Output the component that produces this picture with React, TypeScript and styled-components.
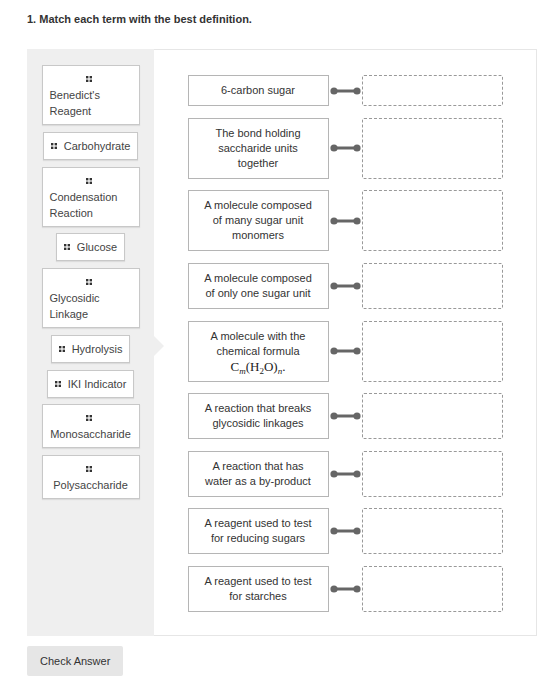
import React from "react";
import styled, { createGlobalStyle } from "styled-components";

const GlobalStyle = createGlobalStyle`
  body {
    margin: 0;
    background: #fff;
    font-family: "Liberation Sans", Arial, sans-serif;
    color: #333;
  }
`;

const Page = styled.div`
  width: 510px;
  padding: 12px 0 0 27px;
`;

const Title = styled.h3`
  margin: 0 0 22px;
  font-size: 11px;
  line-height: 15px;
  font-weight: bold;
  color: #333;
`;

const Board = styled.div`
  display: flex;
  border: 1px solid #e6e6e6;
  border-left: none;
  height: 585px;
`;

const TermColumn = styled.div`
  position: relative;
  width: 127px;
  flex: none;
  background: #efefef;
  margin-top: -1px;
  margin-bottom: -1px;
  padding-top: 16px;
  display: flex;
  flex-direction: column;
  align-items: center;
  gap: 6.75px;

  &::after {
    content: "";
    position: absolute;
    left: 100%;
    top: calc(50% - 7px);
    border-left: 10px solid #efefef;
    border-top: 10px solid transparent;
    border-bottom: 10px solid transparent;
  }
`;

const TermCard = styled.div`
  max-width: 98px;
  box-sizing: border-box;
  background: #fff;
  border: 1px solid #c8c8c8;
  box-shadow: 0 1px 1px rgba(0, 0, 0, 0.08);
  padding: 5px 7px;
  font-size: 11px;
  line-height: 16px;
  text-align: center;
  color: #444;
  cursor: move;
`;

const Label = styled.span`
  display: inline-block;
  text-align: left;
`;

const GripIcon = styled.svg`
  display: inline-block;
  vertical-align: middle;
  margin: -2px 4px 0 0;
`;

const Grip = () => (
  <GripIcon width="6" height="6" viewBox="0 0 6 6">
    <rect x="0" y="0" width="2.4" height="2.4" fill="#333" />
    <rect x="3.6" y="0" width="2.4" height="2.4" fill="#333" />
    <rect x="0" y="3.6" width="2.4" height="2.4" fill="#333" />
    <rect x="3.6" y="3.6" width="2.4" height="2.4" fill="#333" />
  </GripIcon>
);

const DefinitionColumn = styled.div`
  flex: 1;
  padding: 25px 0 22px;
  display: flex;
  flex-direction: column;
  align-items: center;
  gap: 11.65px;
`;

const Row = styled.div`
  display: flex;
  align-items: stretch;
`;

const Definition = styled.div`
  width: 141px;
  box-sizing: border-box;
  border: 1px solid #b5b5b5;
  padding: 7px 12px;
  font-size: 11px;
  line-height: 15px;
  text-align: center;
  color: #333;
`;

const Link = styled.div`
  width: 33px;
  display: flex;
  align-items: center;
  justify-content: center;
`;

const DropZone = styled.div`
  width: 141px;
  box-sizing: border-box;
  border: 1px dashed #999;
  border-radius: 2px;
`;

const Formula = styled.span`
  font-family: "Liberation Serif", "Times New Roman", serif;
  font-size: 13px;
  line-height: 15px;
  display: inline-block;
  vertical-align: top;
  color: #222;

  i {
    font-style: italic;
  }
  sub {
    font-size: 9px;
    line-height: 0;
    vertical-align: -3px;
  }
`;

const CheckButton = styled.button`
  margin-top: 10px;
  height: 30px;
  padding: 0 13px;
  border: none;
  border-radius: 2px;
  background: #e6e6e6;
  color: #333;
  font-family: "Liberation Sans", Arial, sans-serif;
  font-size: 11px;
  cursor: pointer;
`;

const Connector = () => (
  <svg width="31" height="10" viewBox="0 0 31 10">
    <line x1="4" y1="5" x2="27" y2="5" stroke="#666" strokeWidth="3" />
    <circle cx="4" cy="5" r="3.6" fill="#666" />
    <circle cx="27" cy="5" r="3.6" fill="#666" />
  </svg>
);

const terms = [
  "Benedict's Reagent",
  "Carbohydrate",
  "Condensation Reaction",
  "Glucose",
  "Glycosidic Linkage",
  "Hydrolysis",
  "IKI Indicator",
  "Monosaccharide",
  "Polysaccharide",
];

const definitions: React.ReactNode[] = [
  "6-carbon sugar",
  "The bond holding saccharide units together",
  "A molecule composed of many sugar unit monomers",
  "A molecule composed of only one sugar unit",
  <>
    A molecule with the chemical formula{" "}
    <Formula>
      C<sub><i>m</i></sub>(H<sub>2</sub>O)<sub><i>n</i></sub>.
    </Formula>
  </>,
  "A reaction that breaks glycosidic linkages",
  "A reaction that has water as a by-product",
  "A reagent used to test for reducing sugars",
  "A reagent used to test for starches",
];

export default function App() {
  return (
    <Page>
      <GlobalStyle />
      <Title>1. Match each term with the best definition.</Title>
      <Board>
        <TermColumn>
          {terms.map((term) => (
            <TermCard key={term}>
              <Grip /> <Label>{term}</Label>
            </TermCard>
          ))}
        </TermColumn>
        <DefinitionColumn>
          {definitions.map((def, i) => (
            <Row key={i}>
              <Definition>{def}</Definition>
              <Link>
                <Connector />
              </Link>
              <DropZone />
            </Row>
          ))}
        </DefinitionColumn>
      </Board>
      <CheckButton>Check Answer</CheckButton>
    </Page>
  );
}
